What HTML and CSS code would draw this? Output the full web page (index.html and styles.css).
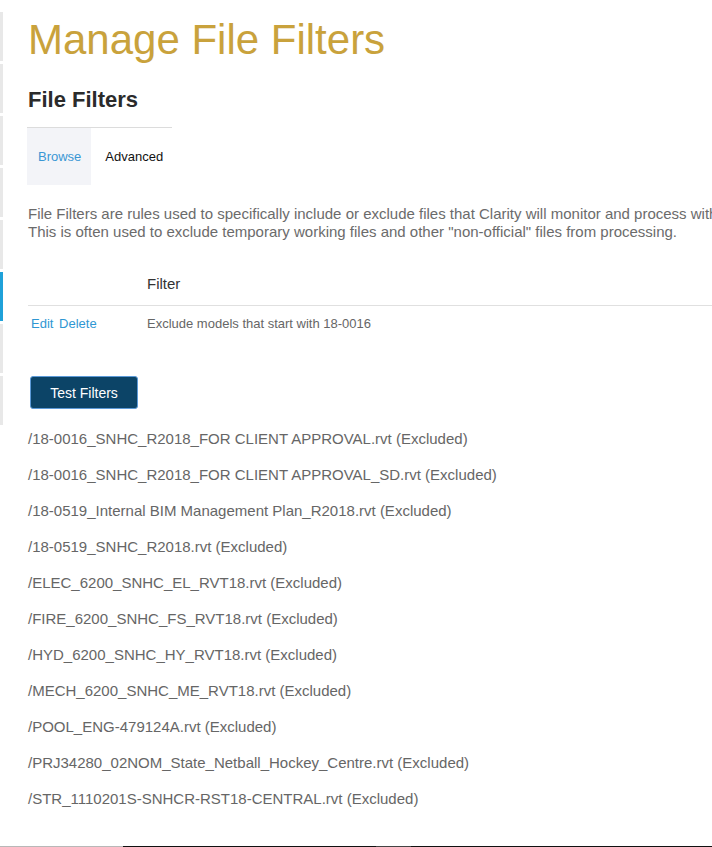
FILE: index.html
```html
<!DOCTYPE html>
<html>
<head>
<meta charset="utf-8">
<link rel="stylesheet" href="styles.css">
</head>
<body>
<div class="app">
  <nav class="rail">
    <span class="seg"></span><span class="seg"></span><span class="seg"></span><span class="seg"></span>
    <span class="seg"></span><span class="seg active"></span><span class="seg"></span><span class="seg"></span>
  </nav>
  <main class="main">
    <h1 class="title">Manage File Filters</h1>
    <h2 class="subtitle">File Filters</h2>
    <div class="tabs">
      <a class="tab active">Browse</a>
      <a class="tab">Advanced</a>
    </div>
    <p class="desc">File Filters are rules used to specifically include or exclude files that Clarity will monitor and process within.<br>This is often used to exclude temporary working files and other "non-official" files from processing.</p>
    <table class="grid">
      <thead>
        <tr><th class="c-act"></th><th class="c-filter">Filter</th></tr>
      </thead>
      <tbody>
        <tr><td class="c-act"><a class="lnk">Edit</a> <a class="lnk">Delete</a></td><td class="c-filter">Exclude models that start with 18-0016</td></tr>
      </tbody>
    </table>
    <button class="btn">Test Filters</button>
    <ul class="files">
      <li>/18-0016_SNHC_R2018_FOR CLIENT APPROVAL.rvt (Excluded)</li>
      <li>/18-0016_SNHC_R2018_FOR CLIENT APPROVAL_SD.rvt (Excluded)</li>
      <li>/18-0519_Internal BIM Management Plan_R2018.rvt (Excluded)</li>
      <li>/18-0519_SNHC_R2018.rvt (Excluded)</li>
      <li>/ELEC_6200_SNHC_EL_RVT18.rvt (Excluded)</li>
      <li>/FIRE_6200_SNHC_FS_RVT18.rvt (Excluded)</li>
      <li>/HYD_6200_SNHC_HY_RVT18.rvt (Excluded)</li>
      <li>/MECH_6200_SNHC_ME_RVT18.rvt (Excluded)</li>
      <li>/POOL_ENG-479124A.rvt (Excluded)</li>
      <li>/PRJ34280_02NOM_State_Netball_Hockey_Centre.rvt (Excluded)</li>
      <li>/STR_1110201S-SNHCR-RST18-CENTRAL.rvt (Excluded)</li>
    </ul>
  </main>
</div>
<div class="bottombar"><span class="b1"></span><span class="b2"></span><span class="b3"></span><span class="b4"></span></div>
</body>
</html>
```
FILE: styles.css
```css
html, body {
  margin: 0;
  padding: 0;
  background: #fff;
  overflow: hidden;
}
body {
  font-family: "Liberation Sans", Arial, sans-serif;
  width: 712px;
  height: 847px;
  position: relative;
}
.app {
  display: flex;
}
.rail {
  display: flex;
  flex-direction: column;
  gap: 3px;
  padding-top: 12px;
  width: 3px;
  flex: 0 0 3px;
}
.seg {
  display: block;
  width: 3px;
  height: 49px;
  background: #e8e8e8;
}
.seg.active {
  background: #1fa1d9;
}
.main {
  padding-left: 25px;
  flex: 1;
  white-space: nowrap;
  overflow: hidden;
}
.title {
  margin: 0;
  padding-top: 14px;
  font-size: 42px;
  font-weight: normal;
  color: #c9a23c;
  line-height: 52px;
}
.subtitle {
  margin: 21px 0 0;
  font-size: 22px;
  font-weight: bold;
  color: #2b2b2b;
  line-height: 26px;
}
.tabs {
  display: flex;
  margin: 14px 0 0 -1px;
  width: 145px;
  border-top: 1px solid #dcdcdc;
}
.tab {
  display: block;
  height: 57px;
  line-height: 57px;
  font-size: 13px;
  color: #111;
  padding: 0 10px;
}
.tab.active {
  background: #f3f4f8;
  color: #3a97d4;
  padding: 0 10px 0 11px;
}
.tab + .tab {
  padding-left: 14px;
}
.desc {
  margin: 20px 0 0;
  font-size: 15px;
  line-height: 18px;
  color: #6b6b6b;
}
.grid {
  margin-top: 20px;
  width: 100%;
  border-collapse: collapse;
}
.grid th {
  text-align: left;
  font-weight: normal;
  font-size: 15px;
  color: #333;
  height: 44px;
  padding: 0;
  border-bottom: 1px solid #e0e0e0;
}
.grid td {
  font-size: 13px;
  color: #666;
  height: 34px;
  padding: 0;
  vertical-align: middle;
}
.c-act {
  width: 116px;
  padding-left: 3px !important;
}
.lnk {
  color: #2f97d3;
  margin-right: 2px;
}
.btn {
  display: block;
  margin: 36px 0 0 2px;
  width: 108px;
  height: 33px;
  background: #0c4467;
  border: 1px solid #5c9ad8;
  border-radius: 3px;
  color: #fff;
  font-family: "Liberation Sans", Arial, sans-serif;
  font-size: 14px;
  padding: 0;
}
.files {
  list-style: none;
  margin: 12px 0 0;
  padding: 0;
}
.files li {
  font-size: 15px;
  color: #666;
  line-height: 36px;
}
.bottombar {
  position: absolute;
  left: 0;
  bottom: 0;
  width: 712px;
  height: 1px;
  display: flex;
}
.b1 { width: 123px; background: #b8b8b8; }
.b2 { width: 253px; background: #111; }
.b3 { width: 35px; background: #444; }
.b4 { flex: 1; background: #111; }
```
